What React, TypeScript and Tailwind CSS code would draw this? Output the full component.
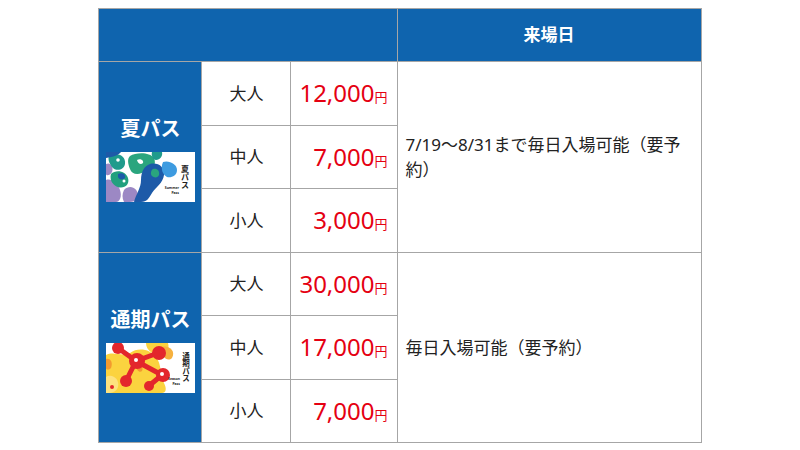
const SANS = "font-['Noto_Sans','Noto_Sans_CJK_JP',sans-serif]";

function SummerCard() {
  return (
    <svg width="89" height="50" viewBox="0 0 89 50" className="block">
      <rect width="89" height="50" fill="#ffffff" />
      {/* purple base blobs */}
      <path d="M0 28 C6 26 12 32 14 38 C16 44 14 50 10 50 L0 50 Z" fill="#9c88c4" />
      <path d="M18 38 C24 32 32 36 32 44 C32 50 26 50 18 50 C16 46 16 42 18 38 Z" fill="#9c88c4" />
      <path d="M0 12 C4 10 8 14 6 20 C4 24 0 24 0 22 Z" fill="#9c88c4" />
      {/* teal / green blobs */}
      <path d="M4 3 C12 0 20 4 19 12 C18 18 10 20 6 15 C3 11 1 6 4 3 Z" fill="#1f9b8c" />
      <path d="M24 4 C30 0 44 0 48 6 C51 13 46 20 40 18 C34 24 26 23 24 17 C22 12 21 7 24 4 Z" fill="#2aa57e" />
      <path d="M31 8 C34 6 38 8 37 11 C35 13 32 12 31 8 Z" fill="#ffffff" />
      <path d="M46 0 L56 0 C57 4 54 8 50 8 C47 8 45 4 46 0 Z" fill="#1f9b8c" />
      <path d="M5 22 C10 17 20 19 22 26 C24 33 18 37 12 35 C8 34 3 29 5 22 Z" fill="#22a07e" />
      <path d="M12 22 C16 20 20 22 19 26 C17 28 13 28 12 25 Z" fill="#1d5aa8" />
      {/* blue diagonal creature */}
      <path d="M44 12 C52 10 59 15 58 23 C57 31 50 35 46 41 C43 46 41 50 35 50 L28 50 C30 42 35 36 35 28 C35 20 38 14 44 12 Z" fill="#1d5aa8" />
      <path d="M47 17 C51 16 54 19 53 23 C52 26 48 26 46 24 C44 22 45 18 47 17 Z" fill="#2aa57e" />
      <path d="M57 10 C63 8 71 12 71 18 C71 24 65 26 61 25 C57 23 54 17 57 10 Z" fill="#3d9be0" />
      <path d="M0 0 L15 0 C13 3 7 5 0 6 Z" fill="#1d5aa8" />
      <circle cx="12" cy="8" r="1.8" fill="#ffffff" />
      <circle cx="18" cy="29" r="1.5" fill="#ffffff" />
      {/* labels */}
      <text x="79" y="13" fontSize="8" fontWeight="700" fill="#222" writingMode="vertical-rl" fontFamily="'Noto Sans CJK JP', sans-serif">夏パス</text>
      <text x="73" y="37" fontSize="3.4" fontWeight="700" textAnchor="end" fill="#222" fontFamily="'Noto Sans', sans-serif">Summer</text>
      <text x="73" y="41.5" fontSize="3.4" fontWeight="700" textAnchor="end" fill="#222" fontFamily="'Noto Sans', sans-serif">Pass</text>
    </svg>
  );
}

function SeasonCard() {
  return (
    <svg width="89" height="50" viewBox="0 0 89 50" className="block">
      <rect width="89" height="50" fill="#ffffff" />
      {/* yellow / orange background */}
      <path d="M0 12 C8 8 16 14 24 10 C32 4 44 6 50 14 C56 22 54 32 58 40 C61 46 60 50 56 50 L0 50 Z" fill="#fbd33f" />
      <path d="M0 34 C6 30 14 36 12 44 C10 50 4 50 0 50 Z" fill="#fde27f" />
      <path d="M40 0 L62 0 C64 6 60 12 54 12 C48 12 40 8 40 0 Z" fill="#fbd33f" />
      <path d="M0 16 C5 15 7 20 5 25 C3 27 0 27 0 25 Z" fill="#f39a2f" />
      <path d="M56 4 C63 2 70 8 66 15 C62 19 55 15 56 4 Z" fill="#f6b13e" />
      <path d="M30 22 C34 20 38 24 36 28 C34 30 30 28 30 22 Z" fill="#f39a2f" />
      {/* red molecule */}
      <path d="M12 5 L30 18 L52 10 M30 18 L56 32 L44 42 M30 18 L20 38" stroke="#e3262c" strokeWidth="5" fill="none" strokeLinecap="round" />
      <circle cx="12" cy="5" r="6" fill="#e3262c" />
      <circle cx="31" cy="18" r="8" fill="#e3262c" />
      <circle cx="53" cy="10" r="7" fill="#e3262c" />
      <circle cx="57" cy="32" r="7" fill="#e3262c" />
      <circle cx="20" cy="38" r="6" fill="#e3262c" />
      <circle cx="43" cy="43" r="5" fill="#e3262c" />
      <circle cx="6" cy="44" r="2" fill="#e3262c" />
      <circle cx="30" cy="17" r="2" fill="#ffffff" />
      <circle cx="56" cy="31" r="2" fill="#ffffff" />
      <circle cx="4" cy="5" r="1.6" fill="#ffffff" />
      {/* labels */}
      <text x="80" y="9" fontSize="7.5" fontWeight="700" fill="#222" writingMode="vertical-rl" fontFamily="'Noto Sans CJK JP', sans-serif">通期パス</text>
      <text x="74" y="37" fontSize="3.4" fontWeight="700" textAnchor="end" fill="#222" fontFamily="'Noto Sans', sans-serif">Season</text>
      <text x="74" y="41.5" fontSize="3.4" fontWeight="700" textAnchor="end" fill="#222" fontFamily="'Noto Sans', sans-serif">Pass</text>
    </svg>
  );
}

interface Row {
  age: string;
  price: string;
}

interface Pass {
  name: string;
  card: React.ReactNode;
  note: string;
  rows: Row[];
}

const passes: Pass[] = [
  {
    name: '夏パス',
    card: <SummerCard />,
    note: '7/19～8/31まで毎日入場可能（要予約）',
    rows: [
      { age: '大人', price: '12,000' },
      { age: '中人', price: '7,000' },
      { age: '小人', price: '3,000' },
    ],
  },
  {
    name: '通期パス',
    card: <SeasonCard />,
    note: '毎日入場可能（要予約）',
    rows: [
      { age: '大人', price: '30,000' },
      { age: '中人', price: '17,000' },
      { age: '小人', price: '7,000' },
    ],
  },
];

export default function App() {
  return (
    <div className={`w-[800px] h-[450px] bg-white pt-[8px] ${SANS}`}>
      <table className="mx-auto w-[602px] table-fixed border-collapse border border-[#a6a6a6]">
        <colgroup>
          <col className="w-[103px]" />
          <col className="w-[89px]" />
          <col className="w-[106px]" />
          <col className="w-[304px]" />
        </colgroup>
        <thead>
          <tr className="h-[53px]">
            <th colSpan={3} className="border border-[#a6a6a6] bg-[#0f64ae]" />
            <th className="border border-[#a6a6a6] bg-[#0f64ae] text-[17px] font-bold text-white">来場日</th>
          </tr>
        </thead>
        <tbody>
          {passes.map((pass) =>
            pass.rows.map((row, i) => (
              <tr key={pass.name + row.age} className="h-[63.5px]">
                {i === 0 && (
                  <td rowSpan={3} className="border border-[#a6a6a6] bg-[#0f64ae] align-middle">
                    <div className="flex flex-col items-center gap-[9px] pt-[4px]">
                      <span className="text-[20px] font-bold leading-[28px] text-white">{pass.name}</span>
                      {pass.card}
                    </div>
                  </td>
                )}
                <td className="border border-[#a6a6a6] text-center text-[17px] text-[#222]">{row.age}</td>
                <td className="border border-[#a6a6a6] pr-[9px] text-right text-[#e50012]">
                  <span className="text-[24px]">{row.price}</span>
                  <span className="text-[13px]">円</span>
                </td>
                {i === 0 && (
                  <td rowSpan={3} className="border border-[#a6a6a6] px-[8px] text-[17px] leading-[25px] text-[#222]">
                    {pass.note}
                  </td>
                )}
              </tr>
            ))
          )}
        </tbody>
      </table>
    </div>
  );
}
